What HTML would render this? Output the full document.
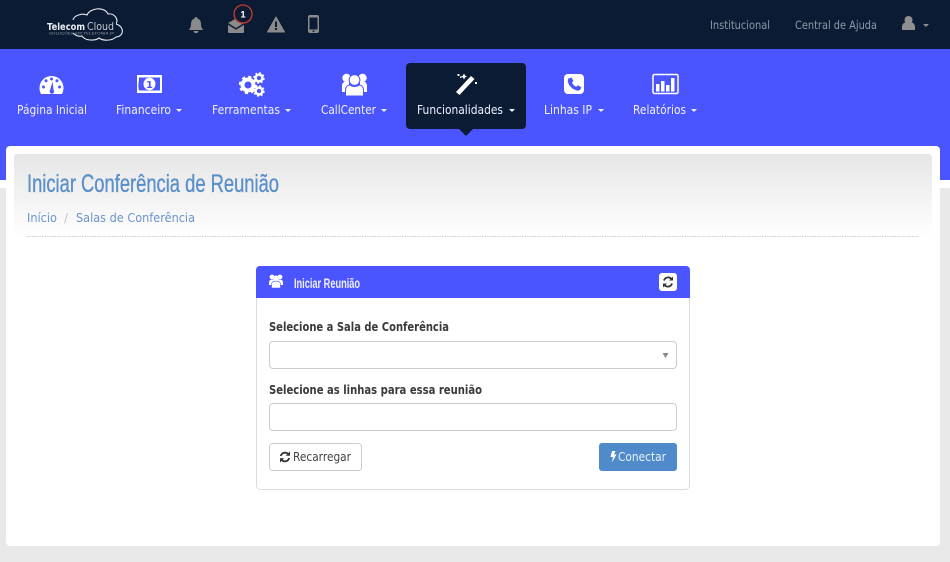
<!DOCTYPE html>
<html lang="pt-BR">
<head>
<meta charset="utf-8">
<title>Iniciar Conferência de Reunião</title>
<style>
html,body{margin:0;padding:0;width:950px;height:562px;overflow:hidden;background:#e9e9e9}
svg{display:block}
text{font-family:"DejaVu Sans","Liberation Sans",sans-serif}
.nav{font-size:12px;fill:#eef0ff}
.top{font-size:11.5px;fill:#8f9aa8}
.lbl{font-size:12px;font-weight:bold;fill:#3a3a3a}
.cond{font-family:"Liberation Sans Narrow","Liberation Sans",sans-serif}
</style>
</head>
<body>
<svg width="950" height="562" viewBox="0 0 950 562" xmlns="http://www.w3.org/2000/svg">
<rect width="950" height="562" fill="#e9e9e9"/>
<rect width="950" height="49" fill="#0a1b33"/>
<rect y="49" width="950" height="131" fill="#4b55ff"/>
<rect y="180" width="950" height="8" fill="#fff"/>
<rect x="6" y="146" width="934" height="400" rx="4" fill="#fff"/>
<defs>
<linearGradient id="hg" x1="0" y1="0" x2="0" y2="1"><stop offset="0" stop-color="#e6e6e6"/><stop offset="1" stop-color="#fff"/></linearGradient>
<g id="gear"><circle r="5.500" fill="none" stroke="#fff" stroke-width="4"/><circle r="8" fill="none" stroke="#fff" stroke-width="2.400" stroke-dasharray="3.140 3.140"/></g>
</defs>
<rect x="14" y="154" width="918" height="84" rx="3" fill="url(#hg)"/>

<!-- logo -->
<path d="M73 20C74 15 83 13 87 15C90 8 104 6 108 14C114 13 119 19 116 24C124 26 125 36 116 37C112 41 103 41 99 38C95 41 85 41 82 36C78 37 75 35 73 33" fill="none" stroke="#e8ebef" stroke-width="1.100"/>
<rect x="46" y="20" width="70" height="12.500" fill="#0a1b33"/>
<text x="47" y="30" font-size="10" font-weight="bold" fill="#eceff3" textLength="38" lengthAdjust="spacingAndGlyphs">Telecom</text>
<text x="87" y="30" font-size="10.500" fill="#c3c9d1" textLength="27" lengthAdjust="spacingAndGlyphs">Cloud</text>
<text x="49" y="34.500" font-size="3.600" fill="#8f99a6" textLength="65" lengthAdjust="spacingAndGlyphs">SOLUÇÕES EM TELEFONIA IP</text>

<!-- top icons -->
<path d="M196 17c1 0 1.500.7 1.500 1.500c2.500.8 3.500 3 3.500 5.500c0 3 1 4.500 2.200 6H188.800c1.200-1.500 2.200-3 2.200-6c0-2.500 1-4.700 3.500-5.500c0-.8.5-1.500 1.500-1.500zM193.500 31h5a2.500 2.200 0 0 1-5 0z" fill="#8a8a8a"/>
<path d="M228 23l8-4.500l8 4.500l-8 5zM228 24.800l8 5l8-5V32a1 1 0 0 1-1 1H229a1 1 0 0 1-1-1z" fill="#8a8a8a"/>
<circle cx="243" cy="14" r="9" fill="#0a1b33" stroke="#c8392e" stroke-width="1.300"/>
<text x="243" y="17.500" font-size="9.500" font-weight="bold" fill="#fff" text-anchor="middle" style="font-family:'Liberation Sans',sans-serif">1</text>
<path d="M276 17l8.500 15h-17z" fill="#8a8a8a" stroke="#8a8a8a" stroke-linejoin="round"/>
<rect x="275" y="21.500" width="2" height="5.500" fill="#0a1b33"/><rect x="275" y="28" width="2" height="2" fill="#0a1b33"/>
<rect x="308" y="15" width="11" height="18" rx="2" fill="#8a8a8a"/>
<rect x="309.500" y="17.500" width="8" height="12" fill="#0a1b33"/>
<circle cx="313.500" cy="31.200" r=".9" fill="#0a1b33"/>

<text class="top" x="710" y="29" textLength="60" lengthAdjust="spacingAndGlyphs">Institucional</text>
<text class="top" x="795" y="29" textLength="82" lengthAdjust="spacingAndGlyphs">Central de Ajuda</text>
<circle cx="908.500" cy="20" r="4" fill="#8f8f8f"/>
<path d="M902 30v-3c0-3 2-4.500 3.500-4.500c1.500 1.200 4.500 1.200 6 0c1.500 0 3.500 1.500 3.500 4.500v3z" fill="#8f8f8f"/>
<path d="M923 24h6l-3 3z" fill="#8f8f8f"/>

<!-- active nav -->
<rect x="406" y="63" width="120" height="66" rx="4" fill="#0a1b33"/>
<path d="M459 129h14l-7 7z" fill="#0a1b33"/>

<!-- nav icons -->
<path d="M41 94c-1-2-1.500-4-1.500-6a12 12 0 0 1 24 0c0 2-.5 4-1.500 6z" fill="#fff"/>
<g fill="#4b55ff"><circle cx="43.500" cy="87" r="1.500"/><circle cx="46" cy="80.800" r="1.500"/><circle cx="51.500" cy="79" r="1.500"/><circle cx="57" cy="80.800" r="1.500"/><circle cx="59.500" cy="87" r="1.500"/><path d="M52.500 81.500l1 8.500a2.200 2.200 0 1 1-3.500 .3z"/></g>

<rect x="137" y="75" width="25" height="18" fill="#fff"/>
<path d="M139 77.500h21v13h-21c0-2-1-2.500-.5-6.500s.5-4.500.5-6.500z" fill="#4b55ff"/>
<ellipse cx="149.500" cy="84" rx="6" ry="6.200" fill="#fff"/>
<text x="149.500" y="88" font-size="10" font-weight="bold" fill="#4b55ff" text-anchor="middle">1</text>

<use href="#gear" transform="translate(248 85)"/>
<use href="#gear" transform="translate(259 78) scale(.62)"/>
<use href="#gear" transform="translate(259 91) scale(.62)"/>

<g fill="#fff">
<circle cx="346.500" cy="78" r="4.200"/><circle cx="362.500" cy="78" r="4.200"/>
<path d="M342 92v-6c0-3 2-4.500 4-4.500h3v10.500z"/><path d="M367 92v-6c0-3-2-4.500-4-4.500h-3v10.500z"/>
<circle cx="354.500" cy="80" r="5.400" stroke="#4b55ff" stroke-width="1"/>
<path d="M345.500 96v-6c0-3.500 2.500-5 4.500-5c2.500 2 6.500 2 9 0c2 0 4.500 1.500 4.500 5v6z" stroke="#4b55ff" stroke-width="1"/>
</g>

<path d="M456 92l15-16l3.500 3l-15 16z" fill="#fff"/>
<g fill="#fff"><path d="M464 73.500l1 2l2 1l-2 1l-1 2l-1-2l-2-1l2-1z"/><rect x="457.500" y="74" width="2" height="2"/><rect x="460" y="76.500" width="1.500" height="1.500"/><rect x="475" y="82" width="2" height="2"/></g>

<rect x="564" y="74" width="20" height="20" rx="4" fill="#fff"/>
<path d="M569 78.500l2.500-1l2 3.500l-1.500 1.500c.7 2 2.300 3.600 4.300 4.300l1.500-1.500l3.500 2l-1 2.500c-1.500 1.200-3 1-5 .2c-3.500-1.500-6-4-7.200-7.500c-.6-2-.4-3.300 .9-4.500z" fill="#4b55ff"/>

<rect x="653" y="74.500" width="25" height="19" rx="1.500" fill="none" stroke="#fff" stroke-width="1.500"/>
<g fill="#fff"><rect x="656" y="84" width="3.500" height="7.500"/><rect x="661" y="81" width="3.500" height="10.500"/><rect x="666" y="85" width="3.500" height="6.500"/><rect x="671" y="78" width="3.500" height="13.500"/></g>

<!-- nav labels -->
<text class="nav" x="17" y="114" textLength="70" lengthAdjust="spacingAndGlyphs">Página Inicial</text>
<text class="nav" x="116" y="114" textLength="55" lengthAdjust="spacingAndGlyphs">Financeiro</text>
<path d="M176 109h6l-3 3z" fill="#eef0ff"/>
<text class="nav" x="212" y="114" textLength="68" lengthAdjust="spacingAndGlyphs">Ferramentas</text>
<path d="M285 109h6l-3 3z" fill="#eef0ff"/>
<text class="nav" x="321" y="114" textLength="55" lengthAdjust="spacingAndGlyphs">CallCenter</text>
<path d="M381 109h6l-3 3z" fill="#eef0ff"/>
<text class="nav" x="417" y="114" textLength="86" lengthAdjust="spacingAndGlyphs">Funcionalidades</text>
<path d="M509 109h6l-3 3z" fill="#eef0ff"/>
<text class="nav" x="544" y="114" textLength="48" lengthAdjust="spacingAndGlyphs">Linhas IP</text>
<path d="M598 109h6l-3 3z" fill="#eef0ff"/>
<text class="nav" x="633" y="114" textLength="53" lengthAdjust="spacingAndGlyphs">Relatórios</text>
<path d="M691 109h6l-3 3z" fill="#eef0ff"/>

<!-- page head -->
<text class="cond" x="27" y="192" font-size="25" fill="#5a8fcb" stroke="#5a8fcb" stroke-width=".35" textLength="252" lengthAdjust="spacingAndGlyphs">Iniciar Conferência de Reunião</text>
<text x="27" y="222" font-size="12.500" fill="#6b93cf" textLength="30" lengthAdjust="spacingAndGlyphs">Início</text>
<text x="64" y="222" font-size="12" fill="#c4c4c4">/</text>
<text x="76" y="222" font-size="12.500" fill="#6b93cf" textLength="119" lengthAdjust="spacingAndGlyphs">Salas de Conferência</text>
<line x1="27" y1="236.500" x2="919" y2="236.500" stroke="#cfcfcf" stroke-dasharray="1.500 1"/>

<!-- panel -->
<rect x="256.500" y="266.500" width="433" height="223" rx="4" fill="#fff" stroke="#dcdcdc"/>
<path d="M256 298V270a4 4 0 0 1 4-4H686a4 4 0 0 1 4 4v28z" fill="#4b55ff"/>
<g fill="#fff">
<circle cx="272" cy="277" r="2.400"/><circle cx="280" cy="277" r="2.400"/><circle cx="276" cy="278.500" r="3"/>
<path d="M269 285v-2.500c0-1.800 1.200-2.800 2.800-2.800h8.400c1.600 0 2.800 1 2.800 2.800v2.500z"/>
<path d="M271.500 288v-3.500c0-2 1.500-3.300 3-3.300h3c1.500 0 3 1.300 3 3.300v3.500z" stroke="#4b55ff" stroke-width=".6"/>
</g>
<text class="cond" x="294" y="288" font-size="14" font-weight="bold" fill="#eef0ff" textLength="66" lengthAdjust="spacingAndGlyphs">Iniciar Reunião</text>
<rect x="659" y="273" width="18" height="18" rx="3" fill="#fff"/>
<g fill="none" stroke="#333" stroke-width="1.800"><path d="M664 280.500a4.300 4.300 0 0 1 7.500-1.500"/><path d="M672 283.500a4.300 4.300 0 0 1-7.500 1.500"/></g>
<path d="M673 276.500v4h-4zM663 287.500v-4h4z" fill="#333"/>

<text class="lbl" x="269" y="331" textLength="180" lengthAdjust="spacingAndGlyphs">Selecione a Sala de Conferência</text>
<rect x="269.500" y="341.500" width="407" height="27" rx="3.500" fill="#fff" stroke="#ccc"/>
<path d="M662.500 353h6l-3 5z" fill="#888"/>
<text class="lbl" x="269" y="394" textLength="213" lengthAdjust="spacingAndGlyphs">Selecione as linhas para essa reunião</text>
<rect x="269.500" y="403.500" width="407" height="27" rx="3.500" fill="#fff" stroke="#ccc"/>

<rect x="269.500" y="443.500" width="92" height="27" rx="3" fill="#fff" stroke="#ccc"/>
<g fill="none" stroke="#333" stroke-width="1.800"><path d="M280.800 456a4.500 4.500 0 0 1 7.700-1.800"/><path d="M289.200 458a4.500 4.500 0 0 1-7.700 1.800"/></g>
<path d="M290 451.500v4.300h-4.300zM280 462.500v-4.300h4.300z" fill="#333"/>
<text x="293" y="461" font-size="12.500" fill="#444" textLength="58" lengthAdjust="spacingAndGlyphs">Recarregar</text>
<rect x="599" y="443" width="78" height="28" rx="3" fill="#4f8bcb"/>
<path d="M612 451h3.500l-1.500 3.500h2.500l-4.500 8l1-5.500h-2.500z" fill="#fff"/>
<text x="618" y="461" font-size="12.500" fill="#e8f0f8" textLength="48" lengthAdjust="spacingAndGlyphs">Conectar</text>
</svg>
</body>
</html>
